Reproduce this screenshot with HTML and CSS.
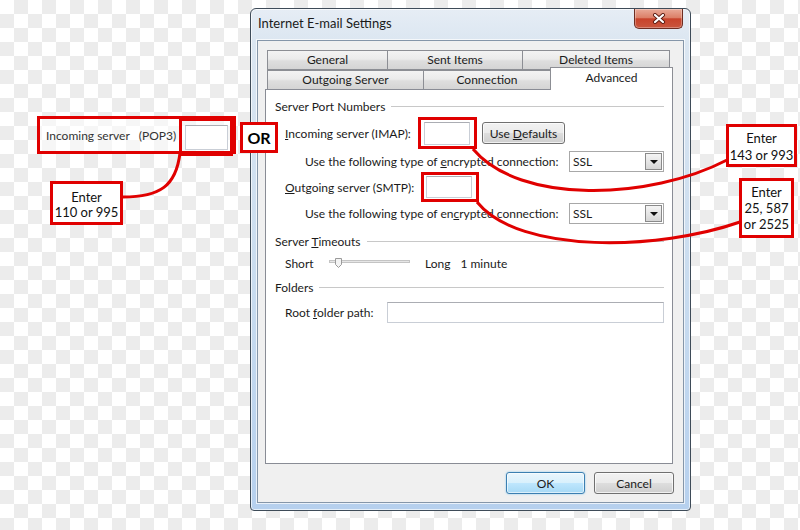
FILE: index.html
```html
<!DOCTYPE html>
<html>
<head>
<meta charset="utf-8">
<title>Internet E-mail Settings</title>
<link rel="stylesheet" href="styles.css">
</head>
<body>
<div class="desktop">
  <div class="window">
    <div class="titlebar">
      <span class="title">Internet E-mail Settings</span>
      <div class="close">
        <svg width="14" height="11" viewBox="0 0 14 11"><path d="M3 2 L11 9 M11 2 L3 9" stroke="#5a1a10" stroke-width="4" stroke-linecap="round"/><path d="M3 2 L11 9 M11 2 L3 9" stroke="#fff" stroke-width="2.2" stroke-linecap="round"/></svg>
      </div>
    </div>
    <div class="client">
      <div class="tabrow row1">
        <div class="tab t-general">General</div>
        <div class="tab t-sent">Sent Items</div>
        <div class="tab t-deleted last">Deleted Items</div>
      </div>
      <div class="tabrow row2">
        <div class="tab t-outgoing">Outgoing Server</div>
        <div class="tab t-connection">Connection</div>
        <div class="tab t-advanced active last">Advanced</div>
      </div>
      <div class="panel">
        <div class="grp h-a"><span>Server Port Numbers</span><i class="rule"></i></div>
        <div class="row h-b ind1">
          <span class="lbl w-imap"><u>I</u>ncoming server (IMAP):</span>
          <span class="textbox port1"></span>
          <span class="btn defaults"><span>Use <u>D</u>efaults</span></span>
        </div>
        <div class="row h-c ind2">
          <span class="lbl w-enc">Use the following type of <u>e</u>ncrypted connection:</span>
          <span class="combo"><span class="val">SSL</span><span class="drop"><i class="tri"></i></span></span>
        </div>
        <div class="row h-d ind1">
          <span class="lbl w-smtp"><u>O</u>utgoing server (SMTP):</span>
          <span class="textbox port2"></span>
        </div>
        <div class="row h-e ind2">
          <span class="lbl w-enc">Use the following type of en<u>c</u>rypted connection:</span>
          <span class="combo"><span class="val">SSL</span><span class="drop"><i class="tri"></i></span></span>
        </div>
        <div class="grp h-f"><span>Server <u>T</u>imeouts</span><i class="rule"></i></div>
        <div class="row h-g ind1">
          <span class="lbl w-short">Short</span>
          <span class="slider">
            <svg width="81" height="12" viewBox="0 0 81 12">
              <rect x="0.5" y="3.5" width="80" height="2" fill="#e6e6e6" stroke="#c4c4c4"/>
              <path d="M6.5 1.5 H12.5 V7.5 L9.5 10.5 L6.5 7.5 Z" fill="#f4f4f4" stroke="#9a9a9a"/>
            </svg>
          </span>
          <span class="long">Long</span>
          <span class="minute">1 minute</span>
        </div>
        <div class="grp h-h"><span>Folders</span><i class="rule"></i></div>
        <div class="row h-i ind1">
          <span class="lbl w-root">Root <u>f</u>older path:</span>
          <span class="textbox rootpath"></span>
        </div>
      </div>
      <div class="footer">
        <span class="btn ok">OK</span>
        <span class="btn cancel">Cancel</span>
      </div>
    </div>
  </div>

  <svg class="curves" width="800" height="530" viewBox="0 0 800 530">
    <path d="M180 153 C176 186 160 197 123 197" />
    <path d="M473 149 C520 205 650 200 727 160" />
    <path d="M477 202 C520 255 660 250 740 222" />
  </svg>

  <div class="note pop3">
    <span class="pop3-label">Incoming server&nbsp;&nbsp; (POP3)</span>
    <span class="hl pop3-hl"><span class="textbox pop3-box"></span></span>
  </div>
  <div class="note orbox">OR</div>
  <div class="hl imap-hl"></div>
  <div class="hl smtp-hl"></div>
  <div class="note enter e1"><span>Enter</span><span>110 or 995</span></div>
  <div class="note enter e2"><span>Enter</span><span>143 or 993</span></div>
  <div class="note enter e3"><span>Enter</span><span>25, 587</span><span>or 2525</span></div>
</div>
</body>
</html>
```

FILE: styles.css
```css
* { box-sizing: border-box; margin: 0; padding: 0; }
html, body { width: 800px; height: 530px; overflow: hidden; }
body {
  font-family: "Lato", "Noto Sans", sans-serif;
  font-size: 12px;
  color: #1b1b1b;
  background-color: #fff;
  background-image: conic-gradient(#ececec 25%, #fff 0 50%, #ececec 0 75%, #fff 0);
  background-size: 28px 28px;
}
u { text-decoration: underline; text-underline-offset: 1px; }

.desktop { position: relative; width: 800px; height: 530px; }

/* window */
.window {
  position: absolute;
  left: 250px; top: 8px;
  width: 441px; height: 503px;
  border: 1px solid #3e4b58;
  border-radius: 6px 6px 4px 4px;
  background: linear-gradient(180deg, #e6edf5 0, #dbe6f1 34px, #c9dcef 55%, #b6d0ee 100%);
  box-shadow: inset 0 0 0 1px rgba(255,255,255,.65);
  padding: 0 6px 7px 6px;
  display: flex;
  flex-direction: column;
}
.titlebar {
  height: 31px;
  display: flex;
  align-items: flex-start;
  flex: none;
}
.title {
  margin: 6px 0 0 1px;
  font-size: 13px;
  line-height: 16px;
  color: #1a1a1a;
}
.close {
  margin-left: auto;
  margin-right: 1px;
  width: 49px; height: 20px;
  border: 1px solid #6d2d22;
  border-top: none;
  border-radius: 0 0 5px 5px;
  background: linear-gradient(180deg, #e9aa98 0, #dc8068 45%, #c8432b 52%, #c9563e 100%);
  box-shadow: inset 0 0 0 1px rgba(255,255,255,.3);
  display: flex; align-items: center; justify-content: center;
}

.client {
  height: 463px;
  border: 1px solid #8596a9;
  box-shadow: 0 0 0 1px rgba(255,255,255,.7);
  background: #f0f0f0;
  display: flex;
  flex-direction: column;
  flex: none;
}

/* tabs */
.tabrow { display: flex; margin-left: 9px; }
.row1 { margin-top: 9px; }
.tab {
  height: 20px;
  border: 1px solid #8c8e94;
  border-right: none;
  background: linear-gradient(180deg, #f3f3f3 0, #ebebeb 45%, #dedede 55%, #d4d4d4 100%);
  text-align: center;
  line-height: 18px;
  font-size: 12px;
  color: #1b1b1b;
}
.tab.last { border-right: 1px solid #8c8e94; }
.t-general { width: 120px; }
.t-sent { width: 135px; }
.t-deleted { width: 148px; }
.t-outgoing { width: 156px; margin-bottom: -1px; }
.t-connection { width: 127px; margin-bottom: -1px; }
.t-advanced { width: 123px; }
.tab.active {
  position: relative;
  z-index: 2;
  height: 23px;
  margin-top: -3px;
  margin-bottom: -1px;
  background: #fff;
  border-bottom: none;
  line-height: 20px;
}

.panel {
  margin-left: 7px;
  width: 408px;
  height: 375px;
  border: 1px solid #898c95;
  background: #fff;
  padding: 4px 8px 0 9px;
  display: flex;
  flex-direction: column;
  flex: none;
}
.grp { display: flex; align-items: center; white-space: nowrap; flex: none; }
.grp .rule { flex: 1; height: 1px; background: #c8c8c8; margin-left: 6px; }
.row { display: flex; align-items: center; white-space: nowrap; flex: none; }
.ind1 { padding-left: 10px; }
.ind2 { padding-left: 30px; }
.h-a { height: 24px; }
.h-b { height: 30px; }
.h-c { height: 26px; }
.h-d { height: 26px; }
.h-e { height: 26px; }
.h-f { height: 30px; }
.h-g { height: 14px; }
.h-h { height: 34px; }
.h-i { height: 16px; }

.lbl { flex: none; }
.w-imap { width: 139px; }
.w-enc { width: 264px; }
.w-smtp { width: 141px; }
.w-short { width: 44px; }
.w-root { width: 102px; }

.textbox {
  display: block;
  flex: none;
  background: #fff;
  border: 1px solid #c9ced6;
  border-top-color: #abadb3;
}
.port1 { width: 46px; height: 23px; }
.port2 { width: 46px; height: 22px; }
.rootpath { flex: 1; height: 21px; }

.btn {
  display: flex; align-items: center; justify-content: center;
  flex: none;
  border: 1px solid #707070;
  border-radius: 3px;
  background: linear-gradient(180deg, #f2f2f2 0, #ebebeb 48%, #dddddd 52%, #cfcfcf 100%);
  box-shadow: inset 0 0 0 1px rgba(255,255,255,.7);
  font-size: 12px;
  color: #1b1b1b;
  white-space: nowrap;
}
.defaults { margin-left: 12px; width: 83px; height: 22px; }

.combo {
  display: flex; align-items: center;
  width: 95px; height: 21px;
  border: 1px solid #a8a8a8;
  background: #fff;
  flex: none;
}
.combo .val { flex: 1; padding-left: 3px; }
.combo .drop {
  width: 17px; height: 17px;
  margin-right: 1px;
  border: 1px solid #8a8a8a;
  background: linear-gradient(180deg, #f4f4f4 0, #e6e6e6 50%, #d6d6d6 100%);
  display: flex; align-items: center; justify-content: center;
}
.tri {
  display: block;
  width: 0; height: 0;
  border-left: 4px solid transparent;
  border-right: 4px solid transparent;
  border-top: 4px solid #111;
  margin-top: 2px;
}

.slider { display: flex; align-items: center; width: 81px; flex: none; }
.long { margin-left: 15px; }
.minute { margin-left: 10px; }

.footer {
  display: flex;
  justify-content: flex-end;
  gap: 9px;
  margin-top: 8px;
  padding-right: 9px;
}
.ok {
  width: 79px; height: 22px;
  border-color: #3c7fb1;
  background: linear-gradient(180deg, #eaf6fd 0, #d9f0fc 48%, #bee6fd 52%, #a7d9f5 100%);
  box-shadow: inset 0 0 0 1px rgba(255,255,255,.6), 0 0 2px #7ec4ee;
}
.cancel { width: 80px; height: 22px; }

/* annotations */
.curves {
  position: absolute; left: 0; top: 0;
  z-index: 5;
  fill: none;
  stroke: #e00000;
  stroke-width: 3;
}
.note, .hl {
  position: absolute;
  z-index: 6;
  border: 3px solid #e00000;
}
.pop3 {
  left: 37px; top: 116px;
  width: 199px; height: 38px;
  background: rgba(255,255,255,.55);
  display: flex; align-items: center;
  padding-left: 6px;
}
.pop3-label { font-size: 12px; color: #333; white-space: nowrap; }
.pop3-hl {
  right: 0; top: -1px;
  width: 54px; height: 38px;
  display: flex; align-items: center; justify-content: center;
}
.pop3-box { width: 43px; height: 25px; }
.orbox {
  left: 240px; top: 122px;
  width: 38px; height: 31px;
  background: #fff;
  display: flex; align-items: center; justify-content: center;
  font-weight: 700; font-size: 16px; color: #000;
}
.imap-hl { left: 418px; top: 117px; width: 59px; height: 32px; }
.smtp-hl { left: 421px; top: 172px; width: 58px; height: 30px; }
.enter {
  background: #fff;
  display: flex; flex-direction: column; align-items: center; justify-content: center;
  font-size: 13px; color: #111;
  white-space: nowrap;
}
.e1 { left: 50px; top: 181px; width: 73px; height: 44px; line-height: 15px; padding-top: 3px; }
.e2 { left: 726px; top: 124px; width: 71px; height: 43px; line-height: 17px; padding-top: 2px; }
.e3 { left: 739px; top: 178px; width: 55px; height: 60px; line-height: 16px; }
```
